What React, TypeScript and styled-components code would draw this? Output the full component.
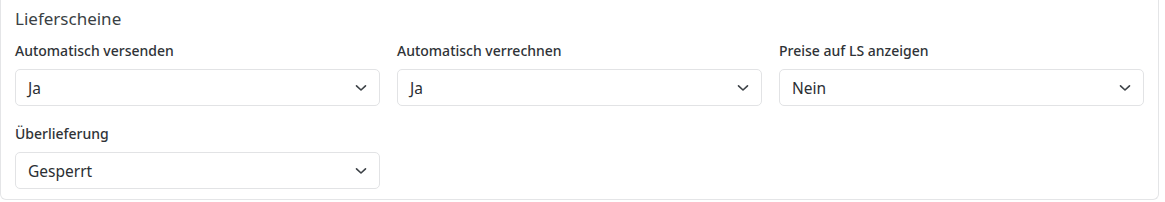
import React from 'react';
import styled, { createGlobalStyle } from 'styled-components';

const Global = createGlobalStyle`
    body {
        margin: 0;
        background: #fff;
        font-family: "Noto Sans", "Open Sans", sans-serif;
        color: #343a40;
    }
`;

const Card = styled.div`
    box-sizing: border-box;
    width: 1159px;
    height: 200px;
    border: 1px solid #e4e5e7;
    border-top: none;
    border-radius: 0 0 6px 6px;
    padding: 7px 14px 10px 14px;
`;

const Title = styled.h5`
    margin: 0 0 10px 0;
    font-size: 17px;
    font-weight: 400;
    line-height: 24px;
    color: #3a3f44;
`;

const Grid = styled.div`
    display: grid;
    grid-template-columns: repeat(3, 365px);
    column-gap: 17px;
    row-gap: 18px;
`;

const Field = styled.div`
    display: flex;
    flex-direction: column;
    gap: 8px;
`;

const Label = styled.label`
    font-size: 14px;
    font-weight: 500;
    line-height: 20px;
    color: #2f3337;
`;

const SelectBox = styled.div`
    box-sizing: border-box;
    height: 37px;
    border: 1px solid #e2e3e5;
    border-radius: 5px;
    display: flex;
    align-items: center;
    justify-content: space-between;
    padding: 0 12px 0 12px;
    font-size: 15.5px;
    color: #2b2f33;
    background: #fff;
`;

const Chevron = () => (
    <svg width="12" height="8" viewBox="0 0 12 8" fill="none">
        <path d="M1.5 1.8 L6 6 L10.5 1.8" stroke="#3d4247" strokeWidth="1.6" strokeLinecap="round" strokeLinejoin="round"/>
    </svg>
);

const fields = [
    { label: 'Automatisch versenden', value: 'Ja' },
    { label: 'Automatisch verrechnen', value: 'Ja' },
    { label: 'Preise auf LS anzeigen', value: 'Nein' },
    { label: 'Überlieferung', value: 'Gesperrt' },
];

function App() {
    return (
        <>
            <Global />
            <Card>
                <Title>Lieferscheine</Title>
                <Grid>
                    {fields.map(f => (
                        <Field key={f.label}>
                            <Label>{f.label}</Label>
                            <SelectBox>
                                <span>{f.value}</span>
                                <Chevron />
                            </SelectBox>
                        </Field>
                    ))}
                </Grid>
            </Card>
        </>
    );
}

export default App;
